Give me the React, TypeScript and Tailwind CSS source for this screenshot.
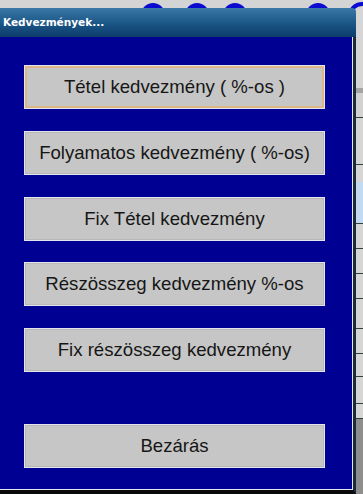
import React from "react";

const buttons = [
  "Tétel kedvezmény ( %-os )",
  "Folyamatos kedvezmény ( %-os)",
  "Fix Tétel kedvezmény",
  "Részösszeg kedvezmény %-os",
  "Fix részösszeg kedvezmény",
];

function DialogButton({ label, focused }: { label: string; focused?: boolean }) {
  return (
    <button
      className={
        "ml-[24px] flex h-[44px] w-[301px] items-center justify-center border border-[#e4e4ee] bg-[#c6c6c6] text-[18.6px] text-[#161616] " +
        (focused ? "shadow-[inset_0_0_0_2px_#dcb888]" : "shadow-[inset_0_0_0_1px_#b8b8b8]")
      }
      style={{ fontFamily: '"Liberation Sans", Arial, sans-serif' }}
    >
      {label}
    </button>
  );
}

export default function App() {
  return (
    <div className="relative flex h-[494px] w-[363px] flex-col overflow-hidden bg-[#d4d4d4]">
      {/* background window peeking above the dialog */}
      <svg className="absolute left-0 top-0" width="363" height="60">
        {[153, 197, 235, 318].map((cx) => (
          <circle key={cx} cx={cx} cy={15} r={12} fill="#0a0ad0" />
        ))}
        <circle cx={362} cy={16} r={12} fill="none" stroke="#0a0ad0" strokeWidth={4} />
        <circle cx={362} cy={62} r={12} fill="none" stroke="#0a0ad0" strokeWidth={4} />
      </svg>

      <div className="h-[8px] shrink-0" />

      <div className="relative flex flex-1">
        {/* dialog */}
        <div className="flex w-[356px] shrink-0 flex-col">
          <div className="flex h-[29px] items-center rounded-tr-[4px] bg-gradient-to-b from-[#3a78a8] via-[#1c5888] to-[#0c3c6c] pl-[3px]">
            <span
              className="text-[10.5px] font-bold text-white"
              style={{ fontFamily: '"DejaVu Sans", sans-serif' }}
            >
              Kedvezmények...
            </span>
          </div>
          <div className="flex flex-1 flex-col border-r-[3px] border-b-[4px] border-r-[#1a2a3a] border-b-[#0a0a0a]">
            <div className="flex flex-1 flex-col border-r-[1px] border-b-[1px] border-[#e8e8f0] bg-[#000092] pt-[28px]">
              <div className="flex flex-col gap-[21.75px]">
                {buttons.map((b, i) => (
                  <DialogButton key={b} label={b} focused={i === 0} />
                ))}
              </div>
              <div className="mt-[52px]">
                <DialogButton label="Bezárás" />
              </div>
            </div>
          </div>
        </div>

        {/* list behind the dialog */}
        <div className="flex flex-1 flex-col bg-[#d6d6d6]">
          <div className="h-[80px] shrink-0" />
          <div className="h-[5px] shrink-0 bg-[#a4a4a4]" />
          <div className="h-[25px] shrink-0 border-b border-[#30403a] bg-[#d2d2d2]" />
          <div className="h-[47px] shrink-0 border-b border-[#30403a]" />
          <div className="h-[17px] shrink-0" />
          <div className="h-[42px] shrink-0 border-b border-[#30403a] bg-[#c2daf2]" />
          <div className="h-[25px] shrink-0 border-b border-[#30403a]" />
          <div className="h-[25px] shrink-0 border-b border-[#30403a]" />
          <div className="h-[25px] shrink-0 border-b border-[#30403a]" />
          <div className="h-[30px] shrink-0 border-b border-[#30403a]" />
          <div className="h-[25px] shrink-0 border-b border-[#30403a]" />
          <div className="h-[23px] shrink-0 border-b border-[#30403a]" />
          <div className="h-[27px] shrink-0 border-b border-[#30403a]" />
          <div className="h-[15px] shrink-0 border-b border-[#30403a]" />
          <div className="flex-1 bg-[#8e8e8e]" />
        </div>
      </div>
    </div>
  );
}
